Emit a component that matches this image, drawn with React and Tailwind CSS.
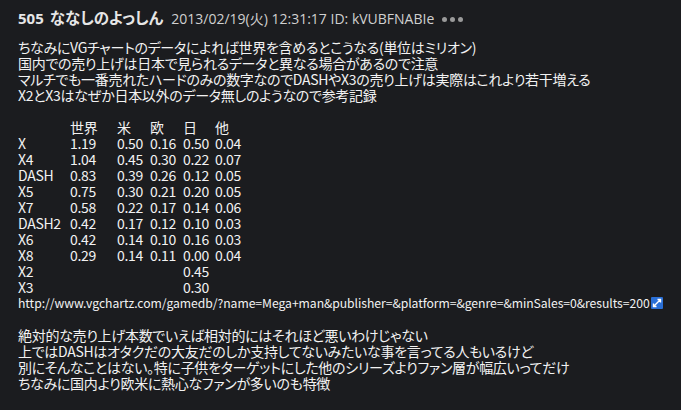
const rows = [
  ["X", "1.19", "0.50", "0.16", "0.50", "0.04"],
  ["X4", "1.04", "0.45", "0.30", "0.22", "0.07"],
  ["DASH", "0.83", "0.39", "0.26", "0.12", "0.05"],
  ["X5", "0.75", "0.30", "0.21", "0.20", "0.05"],
  ["X7", "0.58", "0.22", "0.17", "0.14", "0.06"],
  ["DASH2", "0.42", "0.17", "0.12", "0.10", "0.03"],
  ["X6", "0.42", "0.14", "0.10", "0.16", "0.03"],
  ["X8", "0.29", "0.14", "0.11", "0.00", "0.04"],
  ["X2", "", "", "", "0.45", ""],
  ["X3", "", "", "", "0.30", ""],
];

function Row({ cells }) {
  return (
    <div className="flex h-4 items-center">
      <span className="w-[49px] shrink-0">{cells[0]}</span>
      <span className="w-[50px] shrink-0 pl-[3px]">{cells[1]}</span>
      <span className="w-[33px] shrink-0">{cells[2]}</span>
      <span className="w-[33px] shrink-0">{cells[3]}</span>
      <span className="w-[32px] shrink-0">{cells[4]}</span>
      <span className="shrink-0">{cells[5]}</span>
    </div>
  );
}

export default function App() {
  return (
    <div className="w-[681px] h-[410px] overflow-hidden bg-[#1b1c1f] text-[#f2f2f2] font-['Noto_Sans_CJK_JP',sans-serif] [font-feature-settings:'palt']">
      {/* header */}
      <div className="flex items-baseline pl-[18px] pt-[6px] h-[30px] whitespace-nowrap">
        <span className="text-[15px] font-bold text-[#e6e6e6] mr-[6px] font-['Open_Sans','Noto_Sans_CJK_JP',sans-serif]">505</span>
        <span className="text-[15.5px] font-bold text-[#e6e6e6] mr-[8px]">ななしのよっしん</span>
        <span className="text-[14px] text-[#d0d0d0] font-['Open_Sans','Noto_Sans_CJK_JP',sans-serif]">
          2013/02/19(火) 12:31:17 ID: kVUBFNABIe
        </span>
        <span className="ml-[8px] flex gap-[3px] self-center mt-[2px]">
          <span className="w-[5px] h-[5px] rounded-full bg-[#9a9a9a]" />
          <span className="w-[5px] h-[5px] rounded-full bg-[#9a9a9a]" />
          <span className="w-[5px] h-[5px] rounded-full bg-[#9a9a9a]" />
        </span>
      </div>

      {/* body */}
      <div className="pl-[18px] pt-[9px] text-[14px] leading-4 tracking-[-0.3px] whitespace-nowrap">
        <div>ちなみにVGチャートのデータによれば世界を含めるとこうなる(単位はミリオン)</div>
        <div>国内での売り上げは日本で見られるデータと異なる場合があるので注意</div>
        <div>マルチでも一番売れたハードのみの数字なのでDASHやX3の売り上げは実際はこれより若干増える</div>
        <div>X2とX3はなぜか日本以外のデータ無しのようなので参考記録</div>
        <div className="h-4" />
        <Row cells={["", "世界", "米", "欧", "日", "他"]} />
        {rows.map((r) => (
          <Row key={r[0]} cells={r} />
        ))}
        <div className="flex items-center h-4">
          <span className="text-[12.2px] tracking-[-0.05px]">http://www.vgchartz.com/gamedb/?name=Mega+man&amp;publisher=&amp;platform=&amp;genre=&amp;minSales=0&amp;results=200</span>
          <svg width="12" height="12" viewBox="0 0 12 12" className="ml-[1px]">
            <rect x="0" y="0" width="12" height="12" rx="1" fill="#2a6fd6" />
            <path d="M6.5 2.5h3v3M9.5 2.5L5.5 6.5M5.5 9.5h-3v-3M2.5 9.5l4-4" stroke="#fff" strokeWidth="1.4" fill="none" />
          </svg>
        </div>
        <div className="h-4" />
        <div>絶対的な売り上げ本数でいえば相対的にはそれほど悪いわけじゃない</div>
        <div>上ではDASHはオタクだの大友だのしか支持してないみたいな事を言ってる人もいるけど</div>
        <div>別にそんなことはない。特に子供をターゲットにした他のシリーズよりファン層が幅広いってだけ</div>
        <div>ちなみに国内より欧米に熱心なファンが多いのも特徴</div>
      </div>
    </div>
  );
}
